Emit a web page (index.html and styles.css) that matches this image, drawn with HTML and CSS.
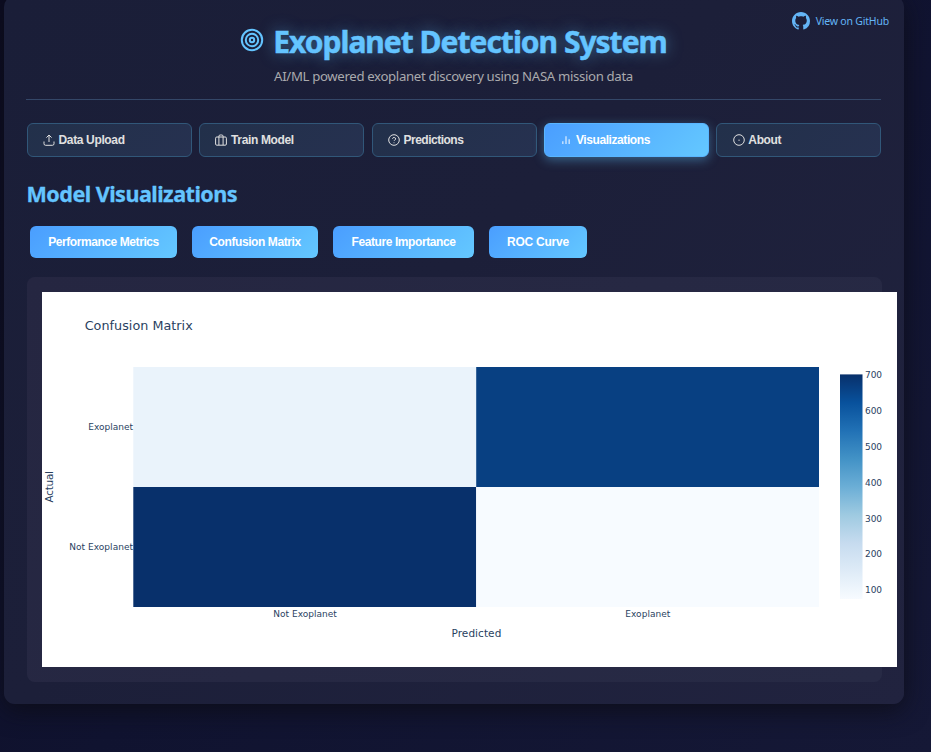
FILE: index.html
```html
<!DOCTYPE html>
<html lang="en">
<head>
<meta charset="utf-8">
<title>Exoplanet Detection System</title>
<link rel="stylesheet" href="styles.css">
</head>
<body>
<main class="container">
  <a class="github" href="#">
    <svg width="18" height="18" viewBox="0 0 16 16" fill="currentColor"><path d="M8 0C3.58 0 0 3.58 0 8c0 3.54 2.29 6.53 5.47 7.59.4.07.55-.17.55-.38 0-.19-.01-.82-.01-1.49-2.01.37-2.53-.49-2.69-.94-.09-.23-.48-.94-.82-1.13-.28-.15-.68-.52-.01-.53.63-.01 1.08.58 1.23.82.72 1.21 1.87.87 2.33.66.07-.52.28-.87.51-1.07-1.78-.2-3.64-.89-3.64-3.95 0-.87.31-1.59.82-2.15-.08-.2-.36-1.02.08-2.12 0 0 .67-.21 2.2.82.64-.18 1.32-.27 2-.27s1.36.09 2 .27c1.53-1.04 2.2-.82 2.2-.82.44 1.1.16 1.92.08 2.12.51.56.82 1.27.82 2.15 0 3.07-1.87 3.75-3.65 3.95.29.25.54.73.54 1.48 0 1.07-.01 1.93-.01 2.2 0 .21.15.46.55.38A8.01 8.01 0 0 0 16 8c0-4.42-3.58-8-8-8z"/></svg>
    <span>View on GitHub</span>
  </a>
  <header class="header">
    <div class="brand">
      <svg class="brand-icon" width="24" height="24" viewBox="0 0 24 24" fill="none" stroke="currentColor" stroke-width="2"><circle cx="12" cy="12" r="10.2"/><circle cx="12" cy="12" r="6.2"/><circle cx="12" cy="12" r="2.2"/></svg>
      <h1 class="title">Exoplanet Detection System</h1>
    </div>
    <p class="subtitle">AI/ML powered exoplanet discovery using NASA mission data</p>
  </header>
  <nav class="tabs">
    <button class="tab"><svg width="12" height="12" viewBox="0 0 12 12"><path d="M1 7.5v2.2q0 1.6 1.6 1.6h6.8q1.6 0 1.6-1.6V7.5M6 8V1.2M3.4 3.6 6 1l2.6 2.6"/></svg><span>Data Upload</span></button>
    <button class="tab"><svg width="12" height="12" viewBox="0 0 12 12"><rect x=".6" y="3" width="10.8" height="8.2" rx="1.2"/><path d="M3.9 11V2.3q0-1.3 1.3-1.3h1.6q1.3 0 1.3 1.3V11"/></svg><span>Train Model</span></button>
    <button class="tab tight"><svg width="12" height="12" viewBox="0 0 12 12"><circle cx="6" cy="6" r="5.3"/><path d="M4.4 4.7c.4-1.8 3.3-1.5 3.3.2 0 1.1-1.6 1.2-1.7 2M6 8.4v.8"/></svg><span>Predictions</span></button>
    <button class="tab active"><svg class="bars" width="12" height="12" viewBox="0 0 12 12"><path d="M2.8 10V7.3M6 10V2.2M9.2 10V5.3"/></svg><span>Visualizations</span></button>
    <button class="tab"><svg width="12" height="12" viewBox="0 0 12 12"><circle cx="6" cy="6" r="5.3"/><path d="M5.4 6.2h1.3"/></svg><span>About</span></button>
  </nav>
  <h2 class="section-title">Model Visualizations</h2>
  <div class="actions">
    <button class="btn b1"><span>Performance Metrics</span></button>
    <button class="btn b2"><span>Confusion Matrix</span></button>
    <button class="btn b3"><span>Feature Importance</span></button>
    <button class="btn b4"><span>ROC Curve</span></button>
  </div>
  <section class="panel">
    <svg class="chart" width="855" height="375" viewBox="42 292 855 375">
      <defs>
        <linearGradient id="blues" x1="0" y1="0" x2="0" y2="1">
          <stop offset="0" stop-color="#08306b"/><stop offset=".125" stop-color="#08519c"/><stop offset=".25" stop-color="#2171b5"/><stop offset=".375" stop-color="#4292c6"/><stop offset=".5" stop-color="#6baed6"/><stop offset=".625" stop-color="#9ecae1"/><stop offset=".75" stop-color="#c6dbef"/><stop offset=".875" stop-color="#deebf7"/><stop offset="1" stop-color="#f7fbff"/>
        </linearGradient>
      </defs>
      <rect x="42" y="292" width="855" height="375" fill="#fff"/>
      <rect x="133.3" y="367" width="342.9" height="120" fill="#eaf3fb"/>
      <rect x="476.2" y="367" width="342.8" height="120" fill="#084082"/>
      <rect x="133.3" y="487" width="342.9" height="120" fill="#08306b"/>
      <rect x="476.2" y="487" width="342.8" height="120" fill="#f7fbff"/>
      <rect x="840" y="374.4" width="22.5" height="224.6" fill="url(#blues)"/>
      <text class="chart-title" x="84.7" y="330" textLength="108">Confusion Matrix</text>
      <g class="tick">
        <text x="88.3" y="430" textLength="44.7">Exoplanet</text>
        <text x="69.3" y="550" textLength="63.7">Not Exoplanet</text>
        <text x="273.3" y="617" textLength="63.5">Not Exoplanet</text>
        <text x="625.3" y="617" textLength="45">Exoplanet</text>
        <text x="865" y="378" textLength="17">700</text>
        <text x="865" y="414" textLength="17">600</text>
        <text x="865" y="450" textLength="17">500</text>
        <text x="865" y="486" textLength="17">400</text>
        <text x="865" y="522" textLength="17">300</text>
        <text x="865" y="557" textLength="17">200</text>
        <text x="865" y="593" textLength="17">100</text>
      </g>
      <g class="axis">
        <text x="451.5" y="637" textLength="49.8">Predicted</text>
        <text transform="translate(53 502.5) rotate(-90)" textLength="31.5">Actual</text>
      </g>
    </svg>
  </section>
</main>
</body>
</html>
```
FILE: styles.css
```css
* { box-sizing: border-box; }
html { height: 100%; overflow: hidden; }
body {
  margin: 0;
  height: 752px;
  overflow: hidden;
  display: flow-root;
  background: linear-gradient(135deg, #0c0c22 0%, #101330 50%, #151836 100%);
  font-family: "Noto Sans", "Open Sans", sans-serif;
}
.container {
  position: relative;
  width: 900px;
  height: 708px;
  margin: -4px 0 0 4px;
  padding: 22px 22.5px;
  border-radius: 11px;
  background: linear-gradient(135deg, #1a1e38 0%, #1c1f39 45%, #21233f 100%);
  box-shadow: 0 6px 24px rgba(12, 12, 20, .8);
}
.github {
  position: absolute;
  top: 16px;
  right: 15px;
  display: flex;
  align-items: center;
  gap: 6px;
  color: #64b5f6;
  font-size: 10.5px;
  line-height: 18px;
  letter-spacing: -.2px;
  text-decoration: none;
}
.header {
  height: 82px;
  margin: 0 .5px 0 -.5px;
  border-bottom: 1px solid #344768;
  text-align: center;
}
.brand {
  display: flex;
  justify-content: center;
  gap: 9px;
  height: 45px;
  color: #64c4ff;
}
.brand-icon { margin-top: 10px; }
.title {
  margin: 3px 0 0;
  font-size: 30px;
  font-weight: 700;
  line-height: 42px;
  letter-spacing: -1px;
  white-space: nowrap;
  text-shadow: 0 0 15px rgba(100, 200, 255, .5);
  -webkit-text-stroke: .5px currentColor;
}
.subtitle {
  margin: 3px 0 0;
  color: #aaaaad;
  font-size: 13.2px;
  line-height: 20px;
  letter-spacing: -.34px;
}
.tabs {
  display: grid;
  grid-template-columns: repeat(5, 1fr);
  gap: 7.5px;
  margin-top: 23px;
}
.tab {
  display: flex;
  align-items: center;
  gap: 4px;
  height: 34px;
  padding: 0 15px;
  border: 1px solid #315779;
  border-radius: 6px;
  background: linear-gradient(135deg, #22304a, #263150);
  color: #e0e0e0;
  font: bold 12px "Liberation Sans", sans-serif;
  letter-spacing: -.35px;
}
.tab.tight { letter-spacing: -.5px; }
.tab:last-child { margin: 0 .2px 0 -.2px; padding-left: 16px; gap: 3px; }
.tab svg {
  fill: none;
  stroke: currentColor;
  stroke-width: 1;
}
.tab .bars { stroke-width: 1.5; opacity: .65; }
.tab.active {
  border-color: #59b6ff;
  background: linear-gradient(135deg, #4a9eff, #64c8ff);
  color: #fff;
  box-shadow: 0 3px 11px rgba(100, 200, 255, .4);
  letter-spacing: -.42px;
}
.section-title {
  margin: 22px 0 0;
  color: #64c4ff;
  font-size: 21.6px;
  font-weight: 700;
  line-height: 30px;
  letter-spacing: -.54px;
  -webkit-text-stroke: .3px currentColor;
}
.actions {
  display: flex;
  gap: 15px;
  margin: 17px 0 0 3.5px;
}
.btn {
  height: 32px;
  padding: 0;
  border: 0;
  border-radius: 6px;
  background: linear-gradient(135deg, #4a9eff, #64c8ff);
  color: #fff;
  font: bold 12px "Liberation Sans", sans-serif;
  letter-spacing: -.42px;
}
.b1 { width: 147px; }
.b2 { width: 126px; }
.b3 { width: 141px; }
.b4 { width: 98px; letter-spacing: -.25px; }
.panel {
  height: 405px;
  margin-top: 19px;
  padding: 15px;
  border-radius: 8px;
  background: linear-gradient(135deg, #252641, #272a45);
}
.chart {
  display: block;
  overflow: visible;
  font-family: "DejaVu Sans", sans-serif;
  fill: #2a3f5f;
}
.chart-title { font-size: 12.75px; }
.tick { font-size: 9px; }
.axis { font-size: 10.5px; }
```
